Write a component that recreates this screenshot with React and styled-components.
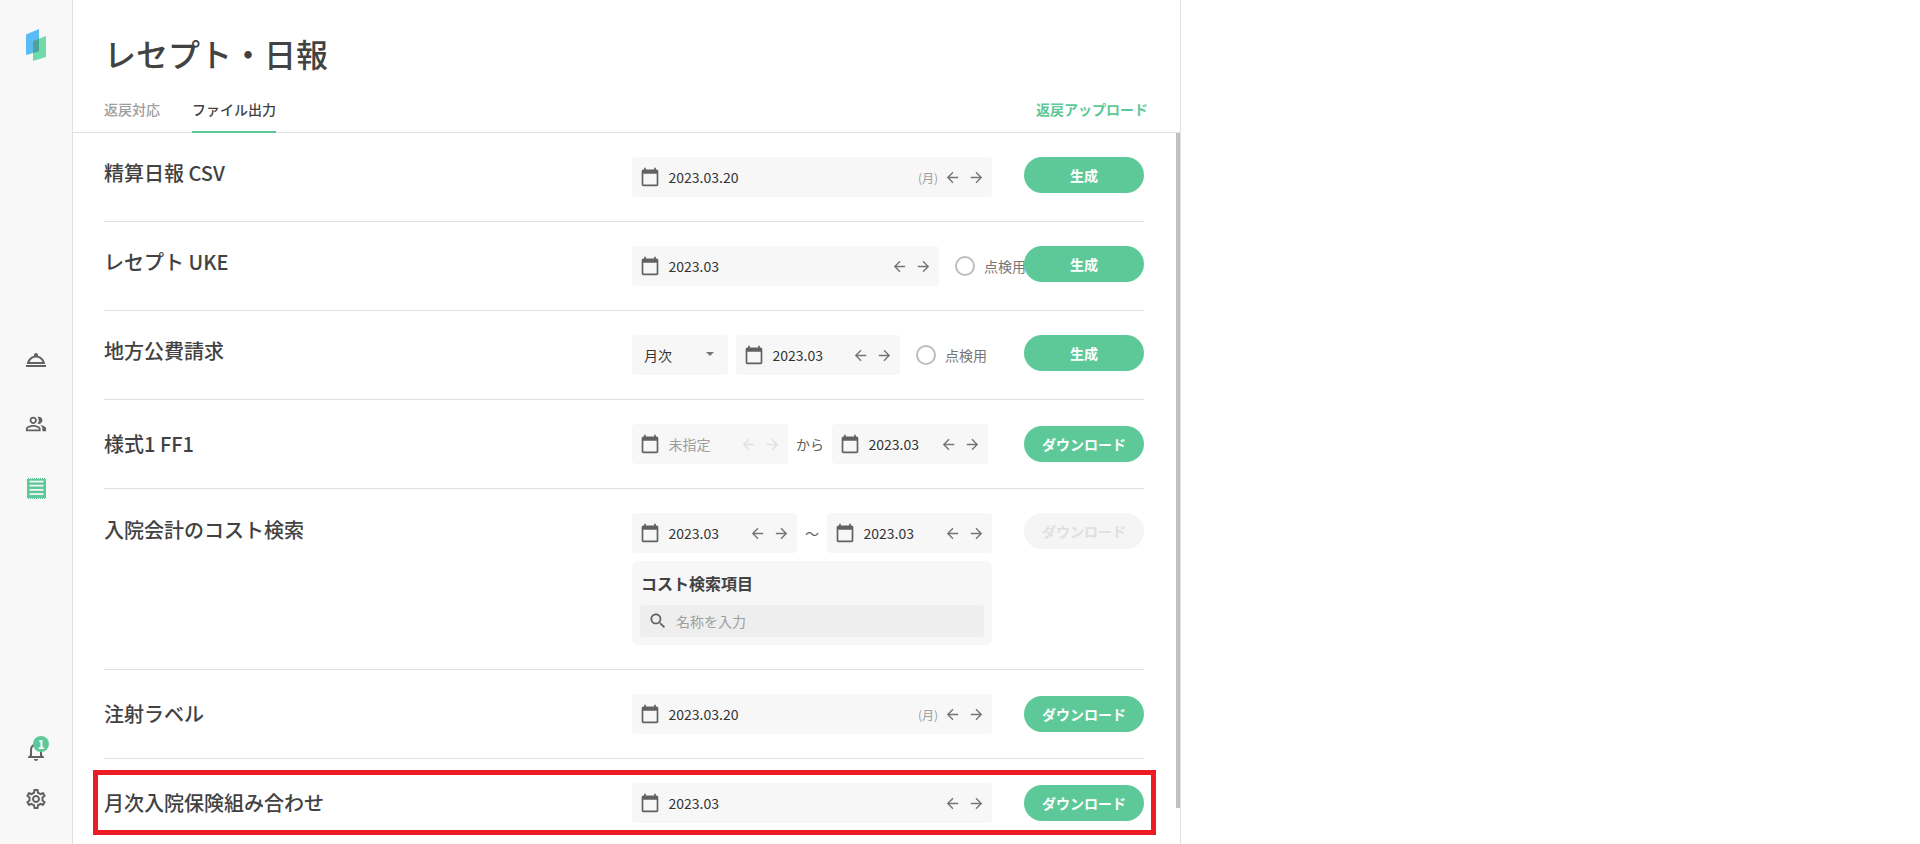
import React from 'react';
import styled, { createGlobalStyle } from 'styled-components';

const GREEN = '#5ec998';

const GlobalStyle = createGlobalStyle`
  html, body {
    margin: 0;
    padding: 0;
    height: 100%;
    background: #fff;
    overflow: hidden;
  }
  body {
    font-family: "Noto Sans CJK JP", "Noto Sans", sans-serif;
    color: #424242;
  }
  * {
    box-sizing: border-box;
  }
`;

const Icon = ({ d, size = 24, color = 'currentColor' }) => (
  <svg width={size} height={size} viewBox="0 0 24 24" fill={color} style={{ flexShrink: 0, display: 'block' }}>
    <path d={d} />
  </svg>
);

const paths = {
  calendar: 'M20 3h-1V1h-2v2H7V1H5v2H4c-1.1 0-2 .9-2 2v16c0 1.1.9 2 2 2h16c1.1 0 2-.9 2-2V5c0-1.1-.9-2-2-2zm0 18H4V8h16v13z',
  back: 'M20 11H7.83l5.59-5.59L12 4l-8 8 8 8 1.41-1.41L7.83 13H20v-2z',
  forward: 'M12 4l-1.41 1.41L16.17 11H4v2h12.17l-5.58 5.59L12 20l8-8z',
  search: 'M15.5 14h-.79l-.28-.27C15.41 12.59 16 11.11 16 9.5 16 5.91 13.09 3 9.5 3S3 5.91 3 9.5 5.91 16 9.5 16c1.61 0 3.09-.59 4.23-1.57l.27.28v.79l5 4.99L20.49 19l-4.99-5zm-6 0C7.01 14 5 11.99 5 9.5S7.01 5 9.5 5 14 7.01 14 9.5 11.99 14 9.5 14z',
  service: 'M18.98 17H2v2h20v-2h-3.02zM21 16c-.27-4.07-3.25-7.4-7.16-8.21.1-.24.16-.51.16-.79 0-1.1-.9-2-2-2s-2 .9-2 2c0 .28.06.55.16.79C6.25 8.6 3.27 11.93 3 16h18zm-9-6.42c2.95 0 5.47 1.83 6.5 4.42h-13c1.03-2.59 3.55-4.42 6.5-4.42z',
  people: 'M16.67 13.13C18.04 14.06 19 15.32 19 17v3h4v-3c0-2.18-3.57-3.47-6.33-3.87zM15 12c2.21 0 4-1.79 4-4s-1.79-4-4-4c-.47 0-.91.1-1.33.24C14.5 5.27 15 6.58 15 8s-.5 2.73-1.33 3.76c.42.14.86.24 1.33.24zM9 12c2.21 0 4-1.79 4-4s-1.79-4-4-4-4 1.79-4 4 1.79 4 4 4zm0-6c1.1 0 2 .9 2 2s-.9 2-2 2-2-.9-2-2 .9-2 2-2zM9 13c-2.67 0-8 1.34-8 4v3h16v-3c0-2.66-5.33-4-8-4zm6 5H3v-.99C3.2 16.29 6.3 15 9 15s5.8 1.29 6 2z',
  bell: 'M12 22c1.1 0 2-.9 2-2h-4c0 1.1.9 2 2 2zm6-6v-5c0-3.07-1.63-5.64-4.5-6.32V4c0-.83-.67-1.5-1.5-1.5s-1.5.67-1.5 1.5v.68C7.64 5.36 6 7.92 6 11v5l-2 2v1h16v-1l-2-2zm-2 1H8v-6c0-2.48 1.51-4.5 4-4.5s4 2.02 4 4.5v6z',
  gear: 'M19.43 12.98c.04-.32.07-.64.07-.98 0-.34-.03-.66-.07-.98l2.11-1.65c.19-.15.24-.42.12-.64l-2-3.46c-.09-.16-.26-.25-.44-.25-.06 0-.12.01-.17.03l-2.49 1c-.52-.4-1.08-.73-1.69-.98l-.38-2.65C14.46 2.18 14.25 2 14 2h-4c-.25 0-.46.18-.49.42l-.38 2.65c-.61.25-1.17.59-1.69.98l-2.49-1c-.06-.02-.12-.03-.18-.03-.17 0-.34.09-.43.25l-2 3.46c-.13.22-.07.49.12.64l2.11 1.65c-.04.32-.07.65-.07.98 0 .33.03.66.07.98l-2.11 1.65c-.19.15-.24.42-.12.64l2 3.46c.09.16.26.25.44.25.06 0 .12-.01.17-.03l2.49-1c.52.4 1.08.73 1.69.98l.38 2.65c.03.24.24.42.49.42h4c.25 0 .46-.18.49-.42l.38-2.65c.61-.25 1.17-.59 1.69-.98l2.49 1c.06.02.12.03.18.03.17 0 .34-.09.43-.25l2-3.46c.12-.22.07-.49-.12-.64l-2.11-1.65zm-1.98-1.71c.04.31.05.52.05.73 0 .21-.02.43-.05.73l-.14 1.13.89.7 1.08.84-.7 1.21-1.27-.51-1.04-.42-.9.68c-.43.32-.84.56-1.25.73l-1.06.43-.16 1.13-.2 1.35h-1.4l-.19-1.35-.16-1.13-1.06-.43c-.43-.18-.83-.41-1.23-.71l-.91-.7-1.06.43-1.27.51-.7-1.21 1.08-.84.89-.7-.14-1.13c-.03-.31-.05-.54-.05-.74s.02-.43.05-.73l.14-1.13-.89-.7-1.08-.84.7-1.21 1.27.51 1.04.42.9-.68c.43-.32.84-.56 1.25-.73l1.06-.43.16-1.13.2-1.35h1.39l.19 1.35.16 1.13 1.06.43c.43.18.83.41 1.23.71l.91.7 1.06-.43 1.27-.51.7 1.21-1.07.85-.89.7.14 1.13zM12 8c-2.21 0-4 1.79-4 4s1.79 4 4 4 4-1.79 4-4-1.79-4-4-4zm0 6c-1.1 0-2-.9-2-2s.9-2 2-2 2 .9 2 2-.9 2-2 2z',
};

const Logo = () => (
  <svg width="20" height="32" viewBox="0 0 20 32" style={{ display: 'block' }}>
    <polygon points="0,5.5 13,0 13,22.5 0,26" fill="#5bbcf5" />
    <polygon points="7,12 20,7 20,28 7,32" fill="#6edba8" />
    <polygon points="7,12 13,9.7 13,22.5 7,24.1" fill="#4fa39a" />
  </svg>
);

const ListIcon = () => (
  <svg width="19" height="21" viewBox="0 0 19 21" style={{ display: 'block' }}>
    <rect width="19" height="21" fill={GREEN} />
    <line x1="0" y1="0.5" x2="19" y2="0.5" stroke="#f8f8f8" strokeDasharray="1 1" />
    <line x1="0" y1="20.5" x2="19" y2="20.5" stroke="#f8f8f8" strokeDasharray="1 1" />
    {[2.7, 6.8, 11, 15.2].map((y) => (
      <rect key={y} x="2.5" y={y} width="14" height="1.7" fill="#f8f8f8" />
    ))}
  </svg>
);

const DateField = ({ value, weekday, width, disabled }) => (
  <Field $width={width}>
    <Icon d={paths.calendar} size={20} color="#616161" />
    <FieldValue $disabled={disabled}>{value}</FieldValue>
    {weekday && <Weekday>(月)</Weekday>}
    <ArrowPair $disabled={disabled}>
      <Arrow><Icon d={paths.back} size={17} /></Arrow>
      <Arrow><Icon d={paths.forward} size={17} /></Arrow>
    </ArrowPair>
  </Field>
);

const CheckOption = () => (
  <CheckLabel>
    <Radio />
    点検用
  </CheckLabel>
);

const App = () => (
  <>
    <GlobalStyle />
    <Page>
      <Sidebar>
        <LogoWrap><Logo /></LogoWrap>
        <NavGroup>
          <NavItem><Icon d={paths.service} /></NavItem>
          <NavItem><Icon d={paths.people} size={22} /></NavItem>
          <NavItem><ListIcon /></NavItem>
        </NavGroup>
        <BottomGroup>
          <BellItem>
            <Icon d={paths.bell} />
            <Badge>1</Badge>
          </BellItem>
          <NavItem><Icon d={paths.gear} /></NavItem>
        </BottomGroup>
      </Sidebar>

      <Main>
        <Header>
          <Title>レセプト・日報</Title>
          <TabBar>
            <Tab>返戻対応</Tab>
            <Tab $active>ファイル出力</Tab>
            <UploadLink>返戻アップロード</UploadLink>
          </TabBar>
        </Header>

        <List>
          <Row>
            <RowTitle>精算日報 CSV</RowTitle>
            <Controls>
              <DateField value="2023.03.20" weekday width="360px" />
            </Controls>
            <ActionButton>生成</ActionButton>
          </Row>

          <Row>
            <RowTitle>レセプト UKE</RowTitle>
            <Controls>
              <DateField value="2023.03" width="307px" />
              <OverlapOption><CheckOption /></OverlapOption>
            </Controls>
            <ActionButton>生成</ActionButton>
          </Row>

          <Row>
            <RowTitle>地方公費請求</RowTitle>
            <Controls>
              <SelectBox>
                月次
                <Caret />
              </SelectBox>
              <DateField value="2023.03" width="164px" />
              <CheckOption />
            </Controls>
            <ActionButton>生成</ActionButton>
          </Row>

          <Row>
            <RowTitle $top={4}>様式1 FF1</RowTitle>
            <Controls>
              <DateField value="未指定" width="156px" disabled />
              <Between>から</Between>
              <DateField value="2023.03" width="156px" />
            </Controls>
            <ActionButton $offset>ダウンロード</ActionButton>
          </Row>

          <Row>
            <RowTitle $top={1}>入院会計のコスト検索</RowTitle>
            <Stack>
              <Controls>
                <DateField value="2023.03" width="165px" />
                <Tilde>〜</Tilde>
                <DateField value="2023.03" width="165px" />
              </Controls>
              <SearchPanel>
                <PanelTitle>コスト検索項目</PanelTitle>
                <SearchBox>
                  <Icon d={paths.search} size={20} color="#616161" />
                  <SearchText>名称を入力</SearchText>
                </SearchBox>
              </SearchPanel>
            </Stack>
            <ActionButton disabled>ダウンロード</ActionButton>
          </Row>

          <Row>
            <RowTitle $top={4}>注射ラベル</RowTitle>
            <Controls>
              <DateField value="2023.03.20" weekday width="360px" />
            </Controls>
            <ActionButton $offset>ダウンロード</ActionButton>
          </Row>

          <Row>
            <RowTitle $top={4}>月次入院保険組み合わせ</RowTitle>
            <Controls>
              <DateField value="2023.03" width="360px" />
            </Controls>
            <ActionButton $offset>ダウンロード</ActionButton>
          </Row>
        </List>

        <ScrollThumb />
        <Highlight />
      </Main>
    </Page>
  </>
);

const Page = styled.div`
  display: flex;
  width: 1920px;
  height: 844px;
  overflow: hidden;
`;

const Sidebar = styled.aside`
  width: 73px;
  height: 844px;
  flex-shrink: 0;
  display: flex;
  flex-direction: column;
  align-items: center;
  background: #f8f8f8;
  border-right: 1px solid #e0e0e0;
  color: #616161;
`;

const LogoWrap = styled.div`
  margin-top: 29px;
  height: 32px;
`;

const NavGroup = styled.nav`
  margin-top: 279px;
  display: flex;
  flex-direction: column;
  gap: 24px;
`;

const NavItem = styled.div`
  width: 40px;
  height: 40px;
  display: flex;
  align-items: center;
  justify-content: center;
`;

const BottomGroup = styled.div`
  margin-top: auto;
  margin-bottom: 25px;
  display: flex;
  flex-direction: column;
  gap: 8px;
`;

const BellItem = styled(NavItem)`
  position: relative;
`;

const Badge = styled.span`
  position: absolute;
  top: 5px;
  left: 17px;
  width: 16px;
  height: 16px;
  border-radius: 50%;
  background: ${GREEN};
  color: #fff;
  font-size: 12px;
  font-weight: 700;
  line-height: 16px;
  text-align: center;
`;

const Main = styled.main`
  position: relative;
  width: 1108px;
  height: 844px;
  flex-shrink: 0;
  border-right: 1px solid #e0e0e0;
`;

const Header = styled.header`
  height: 133px;
  border-bottom: 1px solid #e0e0e0;
  padding: 31px 32px 0 31px;
`;

const Title = styled.h1`
  margin: 0;
  font-size: 32px;
  font-weight: 500;
  line-height: 44px;
  color: #424242;
`;

const TabBar = styled.div`
  display: flex;
  margin-top: 15px;
  gap: 32px;
  height: 42px;
`;

const Tab = styled.div`
  height: 43px;
  font-size: 14px;
  font-weight: 500;
  line-height: 38px;
  color: ${(p) => (p.$active ? '#424242' : '#9e9e9e')};
  border-bottom: ${(p) => (p.$active ? `2px solid ${GREEN}` : 'none')};
`;

const UploadLink = styled.div`
  margin-left: auto;
  font-size: 14px;
  font-weight: 700;
  line-height: 38px;
  color: ${GREEN};
`;

const List = styled.div`
  padding: 0 36px 0 31px;
`;

const Row = styled.section`
  display: grid;
  grid-template-columns: 528px 392px 120px;
  align-items: start;
  padding: 24px 0;
  border-bottom: 1px solid #e0e0e0;

  &:last-child {
    border-bottom: none;
  }
`;

const RowTitle = styled.h2`
  margin: ${(p) => p.$top || 0}px 0 0;
  font-size: 20px;
  font-weight: 500;
  line-height: 32px;
  color: #424242;
`;

const Controls = styled.div`
  display: flex;
  align-items: center;
  gap: 8px;
  height: 40px;
`;

const Stack = styled.div`
  display: flex;
  flex-direction: column;
  gap: 8px;
`;

const Field = styled.div`
  width: ${(p) => p.$width};
  height: 40px;
  flex-shrink: 0;
  display: flex;
  align-items: center;
  padding: 0 4px 0 8px;
  background: #f7f7f7;
  border-radius: 4px;
`;

const FieldValue = styled.span`
  margin-left: 8.5px;
  font-size: 14px;
  color: ${(p) => (p.$disabled ? '#9e9e9e' : '#333')};
`;

const Weekday = styled.span`
  margin-left: auto;
  margin-right: 2px;
  font-size: 12px;
  color: #9e9e9e;
`;

const ArrowPair = styled.div`
  display: flex;
  color: ${(p) => (p.$disabled ? '#e0e0e0' : '#757575')};
  margin-left: auto;

  ${Weekday} + & {
    margin-left: 0;
  }
`;

const Arrow = styled.span`
  width: 24px;
  height: 24px;
  display: flex;
  align-items: center;
  justify-content: center;
`;

const CheckLabel = styled.label`
  display: flex;
  align-items: center;
  margin-left: 8px;
  font-size: 14px;
  color: #757575;
  white-space: nowrap;
`;

const OverlapOption = styled.div`
  width: 77px;
`;

const Radio = styled.span`
  width: 20px;
  height: 20px;
  flex-shrink: 0;
  margin-right: 9px;
  border: 2px solid #bdbdbd;
  border-radius: 50%;
  background: #fff;
`;

const SelectBox = styled.div`
  width: 96px;
  height: 40px;
  flex-shrink: 0;
  display: flex;
  align-items: center;
  justify-content: space-between;
  padding: 0 14px 0 12px;
  background: #f7f7f7;
  border-radius: 4px;
  font-size: 14px;
  color: #333;
`;

const Caret = styled.span`
  width: 0;
  height: 0;
  margin-bottom: 2px;
  border-left: 4px solid transparent;
  border-right: 4px solid transparent;
  border-top: 4px solid #757575;
`;

const Between = styled.span`
  font-size: 14px;
  color: #616161;
`;

const Tilde = styled.span`
  width: 14px;
  font-size: 14px;
  text-align: center;
  color: #616161;
`;

const SearchPanel = styled.div`
  width: 360px;
  height: 84px;
  padding: 8px;
  background: #f7f7f7;
  border-radius: 6px;
`;

const PanelTitle = styled.div`
  height: 36px;
  padding-left: 1px;
  font-size: 16px;
  font-weight: 700;
  line-height: 28px;
  color: #424242;
`;

const SearchBox = styled.div`
  height: 32px;
  display: flex;
  align-items: center;
  padding: 0 8px;
  background: #eee;
  border-radius: 4px;
`;

const SearchText = styled.span`
  margin-left: 8px;
  font-size: 14px;
  color: #9e9e9e;
`;

const ActionButton = styled.button`
  width: 120px;
  height: 36px;
  margin-top: ${(p) => (p.$offset ? '2px' : '0')};
  padding: 0;
  border: none;
  border-radius: 18px;
  background: ${(p) => (p.disabled ? '#f5f5f5' : GREEN)};
  color: ${(p) => (p.disabled ? '#e0e0e0' : '#fff')};
  font-family: inherit;
  font-size: 14px;
  font-weight: 700;
  position: relative;
`;

const ScrollThumb = styled.div`
  position: absolute;
  top: 133px;
  right: 0;
  width: 4px;
  height: 675px;
  background: #c1c1c1;
`;

const Highlight = styled.div`
  position: absolute;
  top: 770px;
  left: 20px;
  width: 1063px;
  height: 65px;
  border: 5px solid #ed1c24;
  pointer-events: none;
`;

export default App;
